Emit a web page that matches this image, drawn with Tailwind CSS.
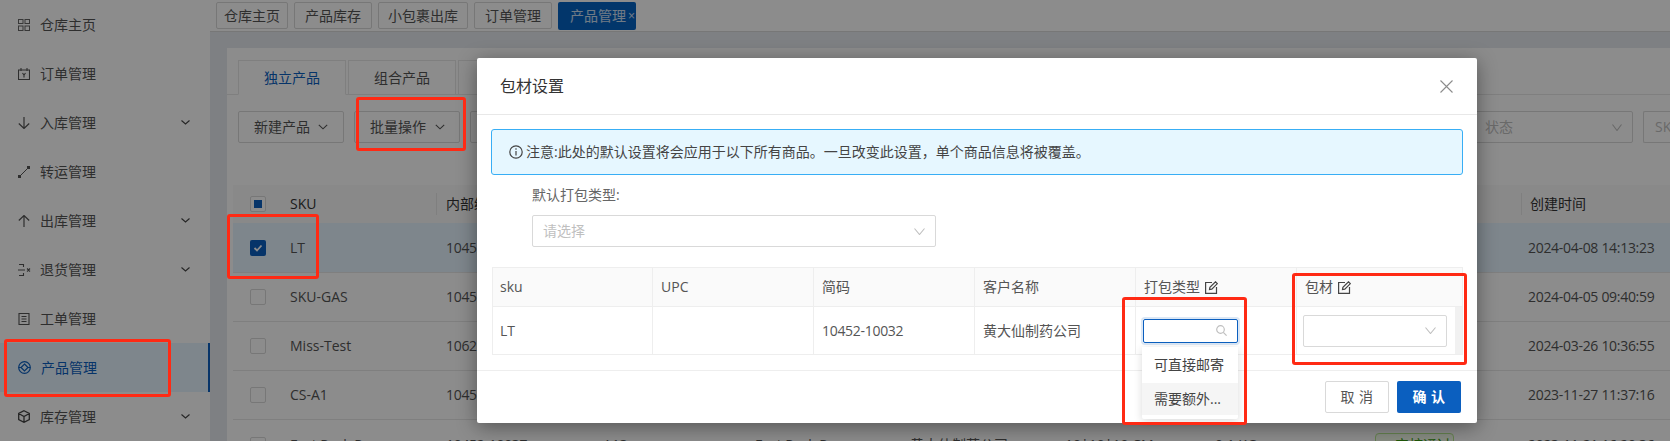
<!DOCTYPE html>
<html lang="zh-CN">
<head>
    <meta charset="UTF-8">
    <title>包材设置</title>
    <script src="https://cdn.jsdelivr.net/npm/@tailwindcss/browser@4"></script>
</head>
<body class="bg-white">
<div class="relative flex h-[441px] w-[1670px] overflow-hidden font-['Open_Sans','Noto_Sans_CJK_SC',sans-serif] text-[14px] leading-[20px] text-[#555]">

    <!-- Sidebar -->
    <aside class="w-[210px] shrink-0 bg-white">
        <div class="flex h-[49px] items-center pl-[18px]">
            <svg class="mr-[10px] h-[12px] w-[12px]" viewBox="0 0 12 12" fill="#666"><path d="M0 0h5.5v5H0zM6.5 0H12v5H6.5zM0 6.500h5.5V12H0zM6.500 6.500H12V12H6.500zM1 1v3h3.500V1zM7.500 1v3H11V1zM1 7.500v3.500h3.500v-3.500zM7.500 7.500v3.500H11v-3.500z" fill-rule="evenodd"/></svg>
            <span>仓库主页</span>
        </div>
        <div class="flex h-[49px] items-center pl-[18px]">
            <svg class="mr-[10px] h-[12px] w-[12px]" viewBox="0 0 12 12" fill="none" stroke="#555" stroke-width="1.100"><path d="M.5 2h11v9.500H.5zM3 0v3M9 0v3"/><path d="M4.500 5 6 7l1.500-2M6 7v2.500" /></svg>
            <span>订单管理</span>
        </div>
        <div class="flex h-[49px] items-center pl-[18px]">
            <svg class="mr-[10px] h-[12px] w-[12px]" viewBox="0 0 12 12" fill="none" stroke="#555" stroke-width="1.200"><path d="M6 0v11.500M.8 6.500 6 11.500l5.200-5"/></svg>
            <span>入库管理</span>
            <svg class="ml-auto mr-[20px] h-[5px] w-[9px]" viewBox="0 0 9 5" fill="none" stroke="#444" stroke-width="1.100"><path d="m.5.500 4 3.500 4-3.500"/></svg>
        </div>
        <div class="flex h-[49px] items-center pl-[18px]">
            <svg class="mr-[10px] h-[12px] w-[12px]" viewBox="0 0 12 12" fill="#555"><path d="M0 9h3v3H0zM9 0h3v3H9z"/><path d="m2 10 8-8" stroke="#555"/></svg>
            <span>转运管理</span>
        </div>
        <div class="flex h-[49px] items-center pl-[18px]">
            <svg class="mr-[10px] h-[12px] w-[12px]" viewBox="0 0 12 12" fill="none" stroke="#555" stroke-width="1.200"><path d="M6 12V.500M.8 5.500 6 .500l5.200 5"/></svg>
            <span>出库管理</span>
            <svg class="ml-auto mr-[20px] h-[5px] w-[9px]" viewBox="0 0 9 5" fill="none" stroke="#444" stroke-width="1.100"><path d="m.5.500 4 3.500 4-3.500"/></svg>
        </div>
        <div class="flex h-[49px] items-center pl-[18px]">
            <svg class="mr-[9px] h-[12px] w-[13px]" viewBox="0 0 13 12" fill="none" stroke="#555" stroke-width="1.100"><path d="M1 .5h4.500v2.500M0 6h7M5.500 9v2.500H1M9 4.500l3 3M12 4.500l-3 3"/></svg>
            <span>退货管理</span>
            <svg class="ml-auto mr-[20px] h-[5px] w-[9px]" viewBox="0 0 9 5" fill="none" stroke="#444" stroke-width="1.100"><path d="m.5.500 4 3.500 4-3.500"/></svg>
        </div>
        <div class="flex h-[49px] items-center pl-[18px]">
            <svg class="mr-[10px] h-[12px] w-[12px]" viewBox="0 0 12 12" fill="none" stroke="#555" stroke-width="1.100"><path d="M1 .5h10v11H1zM3.500 3.500h5M3.500 6h5M3.500 8.500h5"/></svg>
            <span>工单管理</span>
        </div>
        <div class="relative flex h-[49px] items-center bg-[#e6f4ff] pl-[18px] text-[#0b5fbf]">
            <svg class="mr-[10px] h-[13px] w-[13px]" viewBox="0 0 13 13" fill="none" stroke="#0b5fbf" stroke-width="1.200"><circle cx="6.500" cy="6.500" r="5.800"/><path d="M6.500 3 10 6.500 6.500 10 3 6.500zM.7 6.500H3M10 6.500h2.300"/></svg>
            <span>产品管理</span>
            <div class="ml-auto h-full w-[2px] bg-[#0b5fbf]"></div>
        </div>
        <div class="flex h-[49px] items-center pl-[18px]">
            <svg class="mr-[10px] h-[13px] w-[12px]" viewBox="0 0 12 13" fill="none" stroke="#444" stroke-width="1.300"><path d="M6 .7 11.300 3.500v6L6 12.300.7 9.500v-6zM.7 3.500 6 6.500l5.300-3M6 6.500v5.800"/></svg>
            <span>库存管理</span>
            <svg class="ml-auto mr-[20px] h-[5px] w-[9px]" viewBox="0 0 9 5" fill="none" stroke="#444" stroke-width="1.100"><path d="m.5.500 4 3.500 4-3.500"/></svg>
        </div>
    </aside>

    <!-- Main -->
    <main class="flex min-w-0 flex-1 flex-col bg-[#e6e9ee]">
        <!-- Open pages -->
        <div class="flex h-[32px] shrink-0 gap-[6px] border-b border-[#d9d9d9] bg-white pl-[6px] pt-[2px]">
            <div class="flex h-[27px] w-[72px] items-center justify-center rounded-[2px] border border-[#d9d9d9]">仓库主页</div>
            <div class="flex h-[27px] w-[78px] items-center justify-center rounded-[2px] border border-[#d9d9d9]">产品库存</div>
            <div class="flex h-[27px] w-[90px] items-center justify-center rounded-[2px] border border-[#d9d9d9]">小包裹出库</div>
            <div class="flex h-[27px] w-[78px] items-center justify-center rounded-[2px] border border-[#d9d9d9]">订单管理</div>
            <div class="flex h-[28px] w-[78px] items-center gap-[2px] rounded-[2px] bg-[#0563c4] pl-[12px] text-white/80">产品管理<span class="font-['Liberation_Sans'] text-[12px] leading-none">×</span></div>
        </div>

        <div class="min-h-0 flex-1 pl-[17px] pt-[16px]">
            <div class="h-full bg-white">
                <!-- Product tabs -->
                <div class="flex h-[47px] items-end gap-[2px] border-b border-[#e8e8e8] pl-[11px]">
                    <div class="-mb-px flex h-[35px] w-[108px] items-center justify-center border border-b-white border-[#e8e8e8] bg-white text-[#0b5fbf]">独立产品</div>
                    <div class="flex h-[34px] w-[108px] items-center justify-center border border-b-0 border-[#e8e8e8]">组合产品</div>
                    <div class="h-[34px] w-[108px] border border-b-0 border-[#e8e8e8]"></div>
                </div>

                <!-- Toolbar -->
                <div class="mt-[16px] flex h-[32px] gap-[10px] pl-[11px]">
                    <div class="flex w-[106px] items-center rounded-[2px] border border-[#d9d9d9] pl-[15px]">新建产品<svg class="ml-[8px] h-[6px] w-[10px]" viewBox="0 0 10 6" fill="none" stroke="#555" stroke-width="1.100"><path d="m.8.800 4.200 4 4.200-4"/></svg></div>
                    <div class="flex w-[106px] items-center rounded-[2px] border border-[#d9d9d9] pl-[15px]">批量操作<svg class="ml-[9px] h-[6px] w-[10px]" viewBox="0 0 10 6" fill="none" stroke="#555" stroke-width="1.100"><path d="m.8.800 4.200 4 4.200-4"/></svg></div>
                    <div class="w-[106px] rounded-[2px] border border-[#d9d9d9]"></div>
                    <div class="ml-auto flex w-[180px] items-center rounded-[2px] border border-[#d9d9d9] pl-[31px] text-[#bfbfbf]">状态<svg class="ml-auto mr-[10px] h-[7px] w-[10px]" viewBox="0 0 10 7" fill="none" stroke="#bfbfbf" stroke-width="1.100"><path d="m.5.500 4.500 6 4.500-6"/></svg></div>
                    <div class="flex w-[27px] items-center overflow-hidden whitespace-nowrap rounded-l-[2px] border border-r-0 border-[#d9d9d9] pl-[11px] text-[#bfbfbf]">SKU</div>
                </div>

                <!-- Product table -->
                <div class="mt-[42px] pl-[6px]">
                    <div class="grid h-[38px] grid-cols-[57px_156px_157px_152px_155px_155px_150px_160px_153px_155px_1fr] items-center bg-[#fafafa] text-[#333]">
                        <div class="pl-[17px]"><div class="flex h-[16px] w-[16px] items-center justify-center rounded-[2px] border border-[#d9d9d9] bg-white"><div class="h-[8px] w-[8px] bg-[#0b5fbf]"></div></div></div>
                        <div class="font-medium">SKU</div>
                        <div class="-ml-[10px] flex h-[22px] items-center border-l border-[#e8e8e8] pl-[9px]">内部编码</div>
                        <div class="col-start-10 -ml-[7px] flex h-[22px] items-center border-l border-[#e8e8e8] pl-[8px]">创建时间</div>
                    </div>
                    <div class="grid h-[50px] grid-cols-[57px_156px_157px_152px_155px_155px_150px_160px_153px_155px_1fr] items-center border-b border-[#e8e8e8] bg-[#e6f4ff]">
                        <div class="pl-[17px]"><div class="flex h-[16px] w-[16px] items-center justify-center rounded-[2px] bg-[#0b5fbf]"><svg class="h-[10px] w-[10px]" viewBox="0 0 10 10" fill="none" stroke="#fff" stroke-width="1.800"><path d="m1.500 5 2.500 2.500L8.500 2.500"/></svg></div></div>
                        <div>LT</div>
                        <div class="tracking-[-0.3px]">10452-10032</div>
                        <div class="col-start-10 tracking-[-0.3px]">2024-04-08 14:13:23</div>
                    </div>
                    <div class="grid h-[49px] grid-cols-[57px_156px_157px_152px_155px_155px_150px_160px_153px_155px_1fr] items-center border-b border-[#e8e8e8]">
                        <div class="pl-[17px]"><div class="h-[16px] w-[16px] rounded-[2px] border border-[#d9d9d9]"></div></div>
                        <div>SKU-GAS</div>
                        <div class="tracking-[-0.3px]">10452-10031</div>
                        <div class="col-start-10 tracking-[-0.3px]">2024-04-05 09:40:59</div>
                    </div>
                    <div class="grid h-[49px] grid-cols-[57px_156px_157px_152px_155px_155px_150px_160px_153px_155px_1fr] items-center border-b border-[#e8e8e8]">
                        <div class="pl-[17px]"><div class="h-[16px] w-[16px] rounded-[2px] border border-[#d9d9d9]"></div></div>
                        <div>Miss-Test</div>
                        <div class="tracking-[-0.3px]">10625-10030</div>
                        <div class="col-start-10 tracking-[-0.3px]">2024-03-26 10:36:55</div>
                    </div>
                    <div class="grid h-[49px] grid-cols-[57px_156px_157px_152px_155px_155px_150px_160px_153px_155px_1fr] items-center border-b border-[#e8e8e8]">
                        <div class="pl-[17px]"><div class="h-[16px] w-[16px] rounded-[2px] border border-[#d9d9d9]"></div></div>
                        <div>CS-A1</div>
                        <div class="tracking-[-0.3px]">10452-10008</div>
                        <div class="col-start-10 tracking-[-0.3px]">2023-11-27 11:37:16</div>
                    </div>
                    <div class="grid h-[49px] grid-cols-[57px_156px_157px_152px_155px_155px_150px_160px_153px_155px_1fr] items-center">
                        <div class="pl-[17px]"><div class="h-[16px] w-[16px] rounded-[2px] border border-[#d9d9d9]"></div></div>
                        <div>Fast Pack P</div>
                        <div class="tracking-[-0.3px]">10452-10037</div>
                        <div>A13</div>
                        <div>Fast Pack P</div>
                        <div>黄大仙制药公司</div>
                        <div>10*10*10 CM</div>
                        <div>0.1 KG</div>
                        <div><div class="flex h-[24px] w-[79px] items-center gap-[4px] rounded-[4px] border border-[#b7eb8f] bg-[#f6ffed] pl-[7px] text-[#389e0d]"><span class="h-[8px] w-[8px] rounded-full bg-[#13a89e]"></span>审核通过</div></div>
                        <div class="tracking-[-0.3px]">2023-11-21 16:20:36</div>
                    </div>
                </div>
            </div>
        </div>
    </main>

    <!-- Dim layer -->
    <div class="absolute inset-0 z-[5] bg-black/45"></div>

    <!-- Dialog -->
    <div class="absolute left-[477px] top-[58px] z-10 h-[365px] w-[1000px] rounded-[2px] bg-white shadow-[0_4px_20px_rgba(0,0,0,0.4)]">
        <div class="flex h-[57px] items-center justify-between border-b border-[#e8e8e8] pl-[23px] pr-[24px]">
            <span class="text-[16px] text-[#333]">包材设置</span>
            <svg class="h-[13px] w-[13px]" viewBox="0 0 13 13" fill="none" stroke="#8c8c8c" stroke-width="1.100"><path d="m.5.500 12 12M12.500.500l-12 12"/></svg>
        </div>

        <div class="mx-[14px] mt-[14px] flex h-[46px] items-center rounded-[3px] border border-[#38aef5] bg-[#e6f7ff] pl-[17px] text-[#444]">
            <svg class="mr-[3px] h-[14px] w-[14px]" viewBox="0 0 14 14" fill="none" stroke="#444" stroke-width="1.200"><circle cx="7" cy="7" r="6.200"/><path d="M7 6v4.500M7 3.300v1.400"/></svg>
            注意:此处的默认设置将会应用于以下所有商品。一旦改变此设置，单个商品信息将被覆盖。
        </div>

        <div class="ml-[55px] mt-[10px] h-[21px] text-[#666]">默认打包类型:</div>
        <div class="ml-[55px] mt-[9px] flex h-[32px] w-[404px] items-center justify-between rounded-[2px] border border-[#d9d9d9] pl-[10px] pr-[10px] text-[#bfbfbf]">
            请选择
            <svg class="h-[7px] w-[11px]" viewBox="0 0 11 7" fill="none" stroke="#bfbfbf" stroke-width="1.100"><path d="m.5.500 5 6 5-6"/></svg>
        </div>

        <!-- Packing table -->
        <div class="ml-[15px] mt-[20px] w-[971px] border-x border-t border-[#eee]">
            <div class="grid h-[39px] grid-cols-[160px_161px_161px_161px_161px_1fr] items-center border-b border-[#eee] bg-[#fafafa] text-[#555]">
                <div class="flex h-full items-center border-r border-[#eee] pl-[7px] font-medium">sku</div>
                <div class="flex h-full items-center border-r border-[#eee] pl-[8px] font-medium">UPC</div>
                <div class="flex h-full items-center border-r border-[#eee] pl-[8px]">简码</div>
                <div class="flex h-full items-center border-r border-[#eee] pl-[8px]">客户名称</div>
                <div class="flex h-full items-center gap-[5px] border-r border-[#eee] pl-[8px]">打包类型
                    <svg class="h-[13px] w-[13px]" viewBox="0 0 13 13" fill="none" stroke="#444" stroke-width="1.200"><path d="M7 1.500H.6v10.900h10.900V6"/><path d="m4.500 8.500.4-2.200L10.500.8l1.800 1.800-5.500 5.500z"/></svg>
                </div>
                <div class="flex h-full items-center gap-[5px] pl-[8px]">包材
                    <svg class="h-[13px] w-[13px]" viewBox="0 0 13 13" fill="none" stroke="#444" stroke-width="1.200"><path d="M7 1.500H.6v10.900h10.900V6"/><path d="m4.500 8.500.4-2.200L10.500.8l1.800 1.800-5.500 5.500z"/></svg>
                </div>
            </div>
            <div class="grid h-[48px] grid-cols-[160px_161px_161px_161px_161px_1fr] items-center border-b border-[#eee]">
                <div class="flex h-full items-center border-r border-[#eee] pl-[7px]">LT</div>
                <div class="h-full border-r border-[#eee]"></div>
                <div class="flex h-full items-center border-r border-[#eee] pl-[8px] tracking-[-0.3px]">10452-10032</div>
                <div class="flex h-full items-center border-r border-[#eee] pl-[8px]">黄大仙制药公司</div>
                <div class="flex h-full items-center border-r border-[#eee] pl-[7px]">
                    <div class="flex h-[24px] w-[95px] items-center justify-end rounded-[2px] border border-[#0b5fbf] pr-[10px] shadow-[0_0_0_2px_rgba(11,95,191,0.15)]">
                        <svg class="h-[11px] w-[11px]" viewBox="0 0 11 11" fill="none" stroke="#bfbfbf" stroke-width="1.200"><circle cx="4.500" cy="4.500" r="3.800"/><path d="m7.300 7.300 3.300 3.300"/></svg>
                    </div>
                </div>
                <div class="relative flex h-full items-center pl-[6px]">
                    <div class="flex h-[32px] w-[144px] items-center justify-end rounded-[2px] border border-[#d9d9d9] pr-[10px]">
                        <svg class="h-[7px] w-[11px]" viewBox="0 0 11 7" fill="none" stroke="#bfbfbf" stroke-width="1.100"><path d="m.5.500 5 6 5-6"/></svg>
                    </div>
                    <div class="absolute inset-y-0 right-0 w-[7px] bg-[#f1f1f1]"></div>
                </div>
            </div>
        </div>

        <!-- Footer -->
        <div class="mt-[15px] flex justify-end gap-[8px] border-t border-[#eee] pr-[16px] pt-[10px]">
            <div class="flex h-[32px] w-[64px] items-center justify-center rounded-[2px] border border-[#d9d9d9] tracking-[0.5px]">取 消</div>
            <div class="flex h-[32px] w-[64px] items-center justify-center rounded-[2px] bg-[#0b5fbf] font-semibold tracking-[0.5px] text-white">确 认</div>
        </div>

        <!-- Packing type dropdown -->
        <div class="absolute left-[665px] top-[289px] h-[72px] w-[96px] rounded-b-[2px] bg-white shadow-[0_2px_8px_rgba(0,0,0,0.15)]">
            <div class="flex h-[36px] items-center pl-[12px] text-[#444]">可直接邮寄</div>
            <div class="flex h-[32px] items-center bg-[#f5f5f5] pl-[12px] text-[#444]">需要额外...</div>
        </div>
    </div>

    <!-- Red annotation boxes -->
    <div class="absolute left-[356px] top-[97px] z-20 h-[54px] w-[110px] rounded-[3px] border-[3px] border-[#ff2a14]"></div>
    <div class="absolute left-[227px] top-[214px] z-20 h-[65px] w-[92px] rounded-[3px] border-[3px] border-[#ff2a14]"></div>
    <div class="absolute left-[4px] top-[339px] z-20 h-[58px] w-[167px] rounded-[3px] border-[3px] border-[#ff2a14]"></div>
    <div class="absolute left-[1122px] top-[297px] z-20 h-[128px] w-[125px] rounded-[3px] border-[3px] border-[#ff2a14]"></div>
    <div class="absolute left-[1292px] top-[273px] z-20 h-[92px] w-[175px] rounded-[3px] border-[3px] border-[#ff2a14]"></div>
</div>
</body>
</html>
